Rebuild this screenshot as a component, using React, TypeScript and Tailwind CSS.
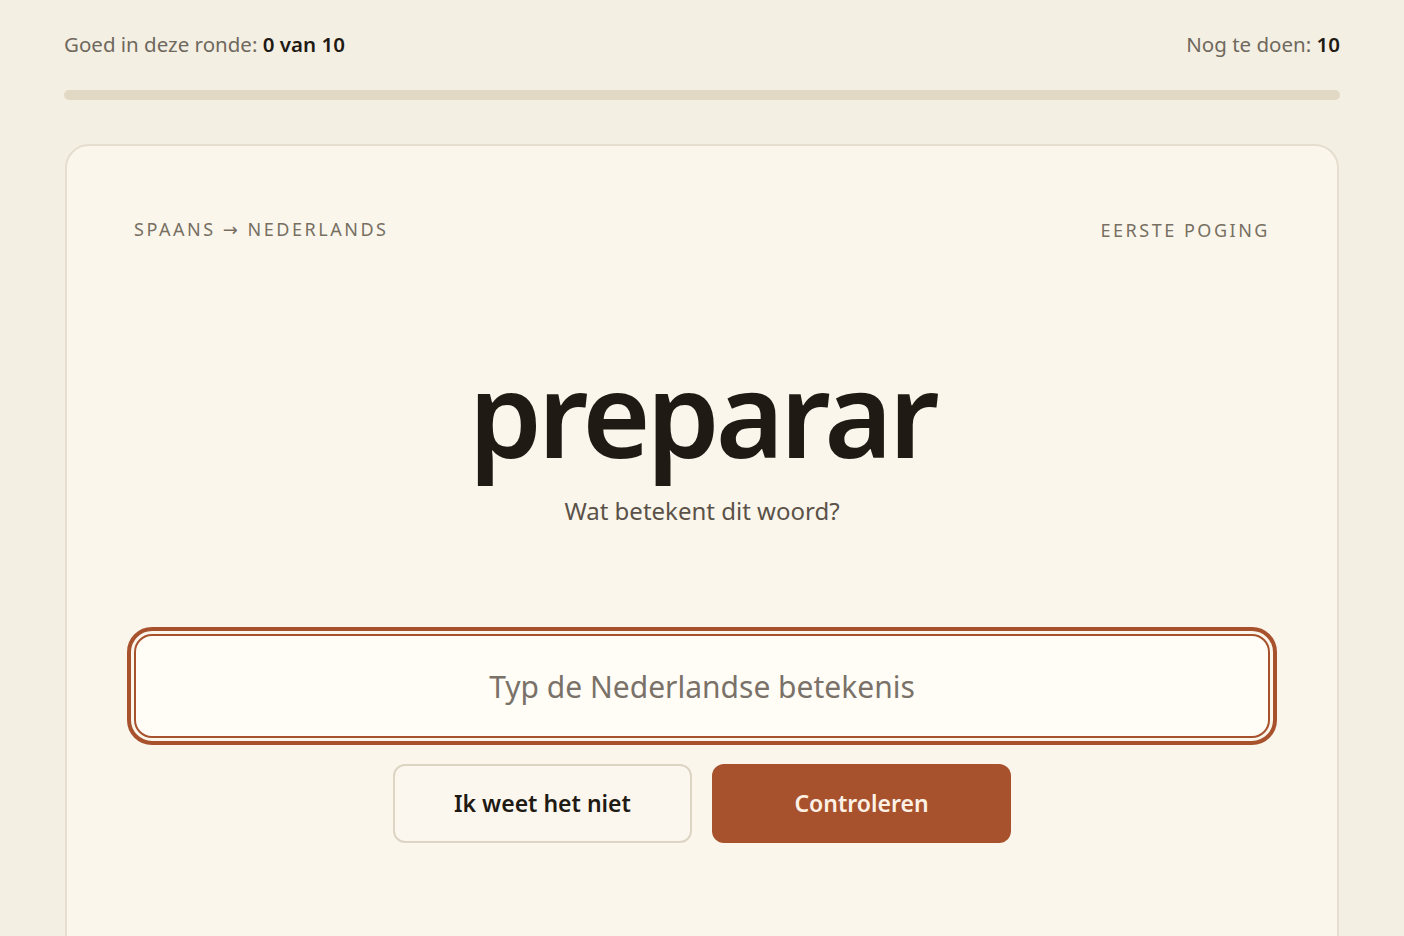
import { useState } from "react";

const font = { fontFamily: '"Noto Sans", "Open Sans", sans-serif' };

function Stats({ correct, total, left }: { correct: number; total: number; left: number }) {
  return (
    <div className="flex items-center justify-between text-[20.5px] leading-[28px] text-[#6f685d]">
      <p>
        Goed in deze ronde: <span className="font-semibold text-[#1f1a14]">{correct} van {total}</span>
      </p>
      <p>
        Nog te doen: <span className="font-semibold text-[#1f1a14]">{left}</span>
      </p>
    </div>
  );
}

export default function App() {
  const [answer, setAnswer] = useState("");

  return (
    <div className="min-h-screen overflow-hidden bg-[#f4efe3] px-16 pt-[30px]" style={font}>
      <Stats correct={0} total={10} left={10} />

      <div className="mt-8 h-[10px] rounded-full bg-[#e2d9c4]" />

      <div className="mx-px mt-[44px] h-[820px] rounded-[24px] border-2 border-[#e5dece] bg-[#faf6ec] px-[67px] pt-[71px]">
        <div className="flex items-center justify-between text-[18px] leading-6 tracking-[0.14em] text-[#776f62] uppercase">
          <span>
            Spaans <span style={{ fontFamily: '"DejaVu Sans", sans-serif' }}>→</span> Nederlands
          </span>
          <span>Eerste poging</span>
        </div>

        <div className="mt-[90px] flex flex-col items-center">
          <h1 className="text-[117px] leading-[162px] font-semibold tracking-[-0.035em] text-[#1f1a14]">
            preparar
          </h1>
          <p className="text-[24px] leading-[33px] text-[#5a5248]">Wat betekent dit woord?</p>
        </div>

        <div className="mt-[107px]">
          <input
            autoFocus
            value={answer}
            onChange={(e) => setAnswer(e.target.value)}
            placeholder="Typ de Nederlandse betekenis"
            className="block h-[104px] w-full rounded-[18px] border-2 border-[#a8522d] bg-[#fffdf6] text-center text-[30px] text-[#1f1a14] outline-4 outline-offset-[3px] outline-[#a8522d] outline-solid placeholder:text-[#7a7269] caret-[#1f1a14]"
            style={font}
          />
        </div>

        <div className="mt-[26px] flex justify-center gap-5">
          <button
            type="button"
            className="h-[79px] w-[299px] rounded-[12px] border-2 border-[#ddd5c4] bg-[#fbf7ee] text-[23px] font-semibold text-[#1f1a14]"
          >
            Ik weet het niet
          </button>
          <button
            type="button"
            className="h-[79px] w-[299px] rounded-[12px] bg-[#a8522d] text-[23px] font-semibold text-[#fdf1e6]"
          >
            Controleren
          </button>
        </div>
      </div>
    </div>
  );
}
